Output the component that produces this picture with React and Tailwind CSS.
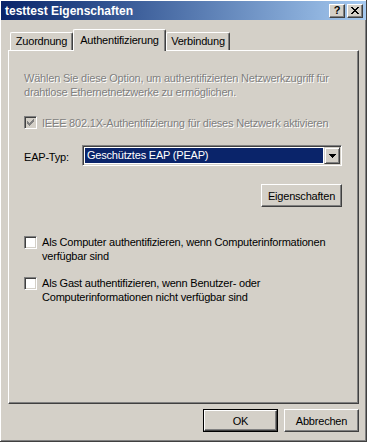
import React from "react";

// classic 3d edges
const raised =
  "border border-t-white border-l-white border-r-[#404040] border-b-[#404040] shadow-[inset_-1px_-1px_0_#808080]";
const sunken =
  "border border-t-[#808080] border-l-[#808080] border-r-white border-b-white shadow-[inset_1px_1px_0_#404040,inset_-1px_-1px_0_#D4D0C8]";
const dimText = "text-[#808080] [text-shadow:1px_1px_0_#fff]";

function CheckBox({ checked, disabled }) {
  return (
    <div className={`w-[13px] h-[13px] shrink-0 flex items-center justify-center ${sunken} ${disabled ? "bg-[#D4D0C8]" : "bg-white"}`}>
      {checked && (
        <svg width="7" height="7" viewBox="0 0 7 7" shapeRendering="crispEdges">
          <path d="M0 2h1v3h-1zM1 3h1v3h-1zM2 4h1v3h-1zM3 3h1v3h-1zM4 2h1v3h-1zM5 1h1v3h-1zM6 0h1v3h-1z" fill={disabled ? "#808080" : "#000"} />
        </svg>
      )}
    </div>
  );
}

function Tab({ label, active, width }) {
  if (active) {
    return (
      <div
        className={`relative z-10 h-[22px] ${width} bg-[#D4D0C8] border-t border-l border-r border-t-white border-l-white border-r-[#404040] shadow-[inset_-1px_0_0_#808080] rounded-t-[2px] flex justify-center pt-[3px]`}
      >
        {label}
      </div>
    );
  }
  return (
    <div
      className={`mt-[3px] h-[18px] ${width} border-t border-l border-r border-t-white border-l-white border-r-[#404040] shadow-[inset_-1px_0_0_#808080] rounded-t-[2px] flex justify-center pt-[1px]`}
    >
      {label}
    </div>
  );
}

export default function App() {
  return (
    <div className="w-[367px] h-[442px] overflow-hidden flex flex-col bg-[#D4D0C8] text-[11px] leading-[14px] tracking-[-0.2px] text-black font-['Liberation_Sans',Arial,sans-serif] shadow-[inset_-1px_-1px_0_#404040,inset_1px_1px_0_#fff,inset_-2px_-2px_0_#808080]">
      {/* Title bar */}
      <div className="mt-[1px] mx-[1px] h-[19px] flex items-center justify-between pl-[4px] pr-[3px] bg-gradient-to-r from-[#0A246A] to-[#A6CAF0]">
        <span className="text-white font-bold text-[12px] tracking-normal">testtest Eigenschaften</span>
        <div className="flex gap-[2px]">
          <div className={`w-[16px] h-[14px] bg-[#D4D0C8] ${raised} flex items-center justify-center text-[11px] font-bold leading-none`}>?</div>
          <div className={`w-[16px] h-[14px] bg-[#D4D0C8] ${raised} flex items-center justify-center`}>
            <svg width="8" height="7" viewBox="0 0 8 7" shapeRendering="crispEdges">
              <path d="M0 0h2v1h-2zM6 0h2v1h-2zM1 1h2v1h-2zM5 1h2v1h-2zM2 2h4v1h-4zM3 3h2v1h-2zM2 4h4v1h-4zM1 5h2v1h-2zM5 5h2v1h-2zM0 6h2v1h-2zM6 6h2v1h-2z" fill="#000" />
            </svg>
          </div>
        </div>
      </div>

      {/* Tabs */}
      <div className="ml-[8px] mt-[9px] h-[21px] flex items-start pl-[2px]">
        <Tab label="Zuordnung" width="w-[63px]" />
        <Tab label="Authentifizierung" width="w-[93px]" active />
        <Tab label="Verbindung" width="w-[64px]" />
      </div>

      {/* Tab panel */}
      <div className="ml-[8px] w-[351px] h-[354px] border border-t-white border-l-white border-r-[#404040] border-b-[#404040] shadow-[inset_-1px_-1px_0_#808080] pl-[15px] pt-[20px] flex flex-col">
        <p className={dimText}>
          Wählen Sie diese Option, um authentifizierten Netzwerkzugriff für
          <br />
          drahtlose Ethernetnetzwerke zu ermöglichen.
        </p>

        <div className="mt-[17px] flex items-center gap-[5px] h-[13px]">
          <CheckBox checked disabled />
          <span className={dimText}>IEEE 802.1X-Authentifizierung für dieses Netzwerk aktivieren</span>
        </div>

        <div className="mt-[16px] flex items-center h-[21px]">
          <span className="w-[58px] pt-[3px]">EAP-Typ:</span>
          <div className={`w-[260px] h-[21px] bg-white ${sunken} p-[1px] flex`}>
            <div className="flex-1 m-[1px] bg-[#0A246A] text-white pl-[2px] leading-[15px]">Geschütztes EAP (PEAP)</div>
            <div className="w-[16px] h-[17px] bg-[#D4D0C8] border border-t-[#D4D0C8] border-l-[#D4D0C8] border-r-[#404040] border-b-[#404040] shadow-[inset_1px_1px_0_#fff,inset_-1px_-1px_0_#808080] flex items-center justify-center">
              <svg width="7" height="4" viewBox="0 0 7 4" shapeRendering="crispEdges">
                <path d="M0 0h7v1h-7zM1 1h5v1h-5zM2 2h3v1h-3zM3 3h1v1h-1z" fill="#000" />
              </svg>
            </div>
          </div>
        </div>

        <div className="mt-[18px] w-[318px] flex justify-end">
          <button className={`w-[81px] h-[23px] bg-[#D4D0C8] ${raised} flex items-center justify-center`}>Eigenschaften</button>
        </div>

        <div className="mt-[28px] flex items-start gap-[5px]">
          <div className="mt-[1px]">
            <CheckBox />
          </div>
          <p>
            Als Computer authentifizieren, wenn Computerinformationen
            <br />
            verfügbar sind
          </p>
        </div>

        <div className="mt-[13px] flex items-start gap-[5px]">
          <div className="mt-[1px]">
            <CheckBox />
          </div>
          <p>
            Als Gast authentifizieren, wenn Benutzer- oder
            <br />
            Computerinformationen nicht verfügbar sind
          </p>
        </div>
      </div>

      {/* Dialog buttons */}
      <div className="mt-[5px] pr-[8px] flex justify-end gap-[6px]">
        <div className="w-[75px] h-[23px] border border-black">
          <button className={`w-full h-full bg-[#D4D0C8] ${raised} flex items-center justify-center`}>OK</button>
        </div>
        <button className={`w-[75px] h-[23px] bg-[#D4D0C8] ${raised} flex items-center justify-center`}>Abbrechen</button>
      </div>
    </div>
  );
}
